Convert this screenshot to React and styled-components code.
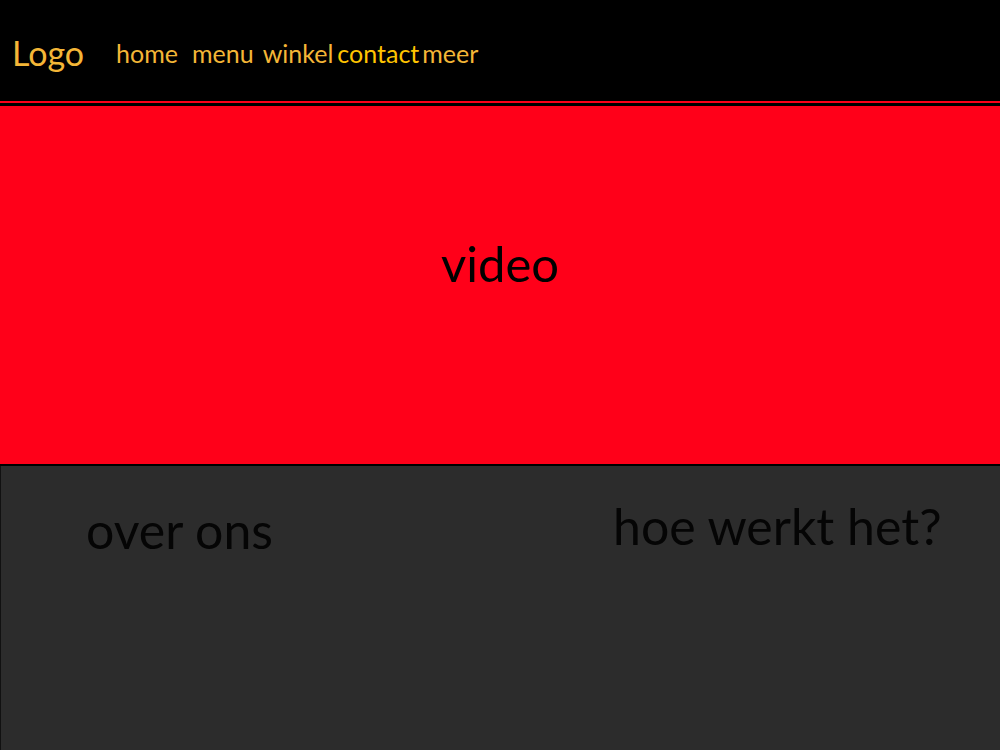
import React from "react";
import styled, { createGlobalStyle } from "styled-components";

const GlobalStyle = createGlobalStyle`
  html, body {
    margin: 0;
    padding: 0;
    background: #2c2c2c;
  }
  body {
    font-family: "Lato", "Open Sans", sans-serif;
  }
`;

const Page = styled.div`
  width: 1000px;
  height: 750px;
  display: flex;
  flex-direction: column;
  overflow: hidden;
`;

const Header = styled.header`
  height: 103px;
  flex-shrink: 0;
  background: #000;
  border-bottom: 2px solid #ff0019;
  display: flex;
  align-items: center;
  padding-left: 12px;
  box-sizing: border-box;
`;

const Logo = styled.div`
  color: #f4b637;
  font-size: 34px;
  margin-right: 32px;
  margin-top: 4px;
`;

const Nav = styled.nav`
  display: flex;
  align-items: center;
  margin-top: 4px;
`;

const NavItem = styled.a`
  color: ${({ $active }) => ($active ? "#ffc400" : "#f4b637")};
  font-size: 25px;
  text-decoration: none;
  margin-right: ${({ $space }) => $space || 0}px;
`;

const Hero = styled.section`
  height: 358px;
  flex-shrink: 0;
  border-top: 3px solid #000;
  border-bottom: 2px solid #000;
  background: #ff0019;
  display: flex;
  align-items: center;
  justify-content: center;
  box-sizing: content-box;
`;

const HeroText = styled.span`
  color: #000;
  font-size: 49px;
  margin-bottom: 44px;
`;

const Info = styled.section`
  flex: 1;
  background: #2c2c2c;
  border-left: 1px solid #111;
  display: grid;
  grid-template-columns: 526px 1fr;
  align-items: start;
`;

const InfoTitle = styled.h2`
  margin: 0;
  font-weight: 400;
  font-size: 50px;
  color: #050505;
  padding-left: ${({ $left }) => $left}px;
  padding-top: ${({ $top }) => $top}px;
`;

export default function App() {
  return (
    <Page>
      <GlobalStyle />
      <Header>
        <Logo>Logo</Logo>
        <Nav>
          <NavItem $space={14}>home</NavItem>
          <NavItem $space={9}>menu</NavItem>
          <NavItem $space={4}>winkel</NavItem>
          <NavItem $active $space={3}>contact</NavItem>
          <NavItem>meer</NavItem>
        </Nav>
      </Header>
      <Hero>
        <HeroText>video</HeroText>
      </Hero>
      <Info>
        <InfoTitle $left={85} $top={34}>over ons</InfoTitle>
        <InfoTitle $left={86} $top={30}>hoe werkt het?</InfoTitle>
      </Info>
    </Page>
  );
}
